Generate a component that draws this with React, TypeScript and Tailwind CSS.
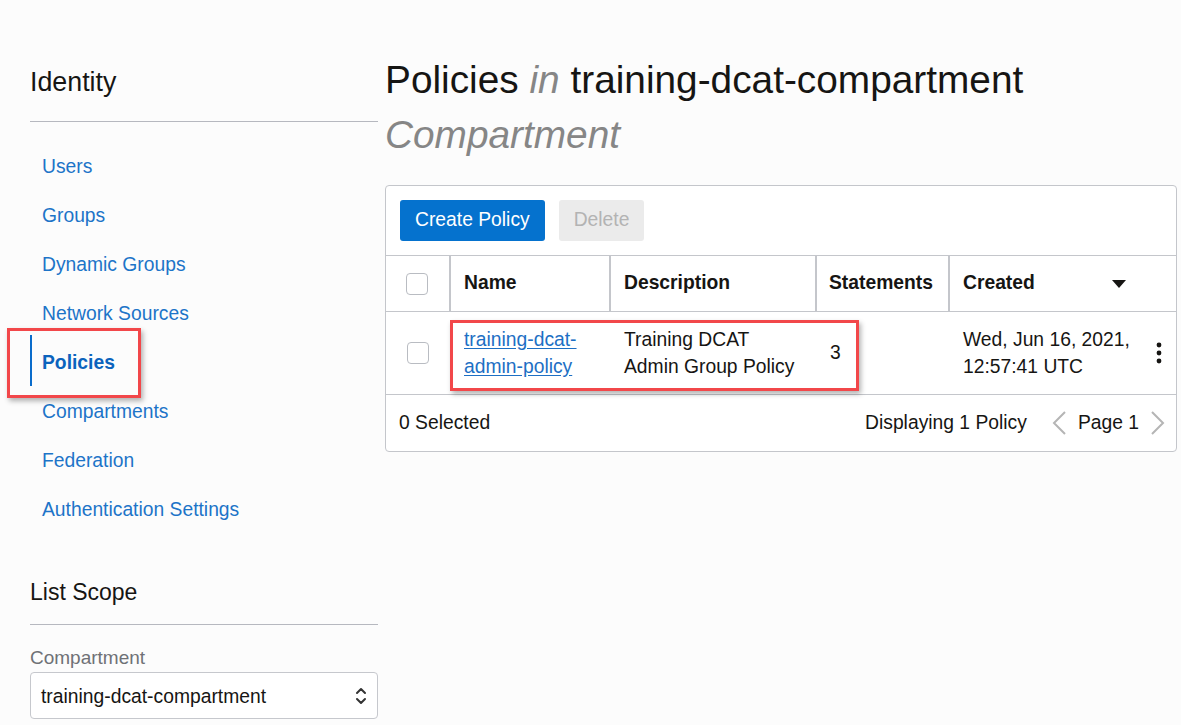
import React from "react";

const navItems = [
  "Users",
  "Groups",
  "Dynamic Groups",
  "Network Sources",
  "Policies",
  "Compartments",
  "Federation",
  "Authentication Settings",
];

function Checkbox() {
  return <div className="w-[22px] h-[22px] rounded-[4px] border border-[#b9bcc2] bg-white" />;
}

export default function App() {
  return (
    <div
      className="relative w-[1181px] h-[725px] overflow-hidden bg-[#fcfcfc] text-[#161513] flex"
      style={{ fontFamily: '"Liberation Sans", Arial, sans-serif' }}
    >
      {/* Sidebar */}
      <aside className="w-[378px] shrink-0 pl-[30px] pt-[66px]">
        <h2 className="text-[26.8px] leading-[32px] font-normal">Identity</h2>
        <div className="mt-[23px] h-px bg-[#b6b8bf]" />
        <nav className="mt-[21px] flex flex-col">
          {navItems.map((item) => {
            const active = item === "Policies";
            return (
              <div key={item} className="relative h-[49px] flex items-center pl-[12px]">
                {active && <div className="absolute left-0 top-[-4px] h-[51px] w-[2px] bg-[#0a6ccb]" />}
                <span
                  className={
                    active
                      ? "text-[19.3px] font-bold text-[#0b63bd]"
                      : "text-[19.3px] text-[#1d74c8]"
                  }
                >
                  {item}
                </span>
              </div>
            );
          })}
        </nav>
        <h2 className="mt-[41px] text-[23px] leading-[32px] font-normal">List Scope</h2>
        <div className="mt-[16px] h-px bg-[#b6b8bf]" />
        <div className="mt-[21px] text-[19px] leading-[24px] text-[#6f7176]">Compartment</div>
        <div className="mt-[2px] h-[47px] rounded-[4px] border border-[#c6c8cd] bg-white flex items-center justify-between pl-[10px] pr-[10px]">
          <span className="text-[19.3px] text-[#161513] pt-[3px]">training-dcat-compartment</span>
          <svg width="12" height="20" viewBox="0 0 12 20" fill="none" stroke="#333" strokeWidth="2" strokeLinecap="round" strokeLinejoin="round">
            <polyline points="2,7 6,3 10,7" />
            <polyline points="2,13 6,17 10,13" />
          </svg>
        </div>
      </aside>

      {/* Main */}
      <main className="flex-1 pl-[7px] pr-[4px] pt-[52px]">
        <h1 className="text-[38.8px] leading-[55px] font-normal whitespace-nowrap">
          Policies <span className="italic text-[#868686]">in</span> training-dcat-compartment
          <br />
          <span className="italic text-[#868686]">Compartment</span>
        </h1>

        <div className="mt-[23px] border border-[#c4c6cb] rounded-[4px] bg-white text-[19.3px]">
          {/* Toolbar */}
          <div className="flex items-center gap-[14px] px-[14px] pt-[14px] pb-[14px] border-b border-[#c4c6cb]">
            <button className="h-[41px] px-[15px] rounded-[3px] bg-[#0572ce] text-white text-[19.3px]">
              Create Policy
            </button>
            <button className="h-[41px] px-[15px] rounded-[3px] bg-[#ebebeb] text-[#b3b3b3] text-[19.3px]">
              Delete
            </button>
          </div>

          {/* Header */}
          <div className="flex h-[56px] border-b border-[#c4c6cb] font-bold text-[#161513]">
            <div className="w-[65px] flex items-center justify-center border-r-2 border-[#c4c6cb] pr-[2px]">
              <Checkbox />
            </div>
            <div className="w-[160px] flex items-center pl-[13px] border-r-2 border-[#c4c6cb]">Name</div>
            <div className="w-[206px] flex items-center pl-[13px] border-r-2 border-[#c4c6cb]">Description</div>
            <div className="w-[133px] flex items-center pl-[12px] border-r-2 border-[#c4c6cb]">Statements</div>
            <div className="flex-1 flex items-center pl-[13px] pr-[50px] justify-between">
              <span>Created</span>
              <svg width="14" height="8" viewBox="0 0 14 8">
                <polygon points="0,0 14,0 7,8" fill="#161513" />
              </svg>
            </div>
          </div>

          {/* Row */}
          <div className="flex h-[83px] border-b border-[#c4c6cb] leading-[27px]">
            <div className="w-[65px] flex items-center justify-center pr-[2px]">
              <Checkbox />
            </div>
            <div className="w-[160px] flex items-center pl-[13px]">
              <a className="text-[#1d6fc4] underline underline-offset-2">
                training-dcat-
                <br />
                admin-policy
              </a>
            </div>
            <div className="w-[206px] flex items-center pl-[13px]">
              <span>
                Training DCAT
                <br />
                Admin Group Policy
              </span>
            </div>
            <div className="w-[133px] flex items-center pl-[13px] pb-[2px]">3</div>
            <div className="flex-1 flex items-center pl-[13px] pr-[14px] justify-between">
              <span>
                Wed, Jun 16, 2021,
                <br />
                12:57:41 UTC
              </span>
              <svg width="6" height="22" viewBox="0 0 6 22">
                <circle cx="3" cy="3" r="2.4" fill="#161513" />
                <circle cx="3" cy="11" r="2.4" fill="#161513" />
                <circle cx="3" cy="19" r="2.4" fill="#161513" />
              </svg>
            </div>
          </div>

          {/* Footer */}
          <div className="flex h-[56px] items-center justify-between pl-[13px] pr-[10px]">
            <span>0 Selected</span>
            <div className="flex items-center">
              <span>Displaying 1 Policy</span>
              <svg className="ml-[24px]" width="16" height="26" viewBox="0 0 16 26" fill="none" stroke="#b5b5b5" strokeWidth="2">
                <polyline points="14,2 3,13 14,24" />
              </svg>
              <span className="ml-[11px]">Page 1</span>
              <svg className="ml-[11px]" width="16" height="26" viewBox="0 0 16 26" fill="none" stroke="#b5b5b5" strokeWidth="2">
                <polyline points="2,2 13,13 2,24" />
              </svg>
            </div>
          </div>
        </div>
      </main>

      {/* Annotation highlight boxes */}
      <div className="absolute left-[7px] top-[328px] w-[134px] h-[70px] border-[3px] border-[#f2474a] shadow-[2px_3px_5px_rgba(0,0,0,0.3)]" />
      <div className="absolute left-[450px] top-[320px] w-[409px] h-[71px] border-[3px] border-[#f2474a] shadow-[2px_3px_5px_rgba(0,0,0,0.3)]" />
    </div>
  );
}
